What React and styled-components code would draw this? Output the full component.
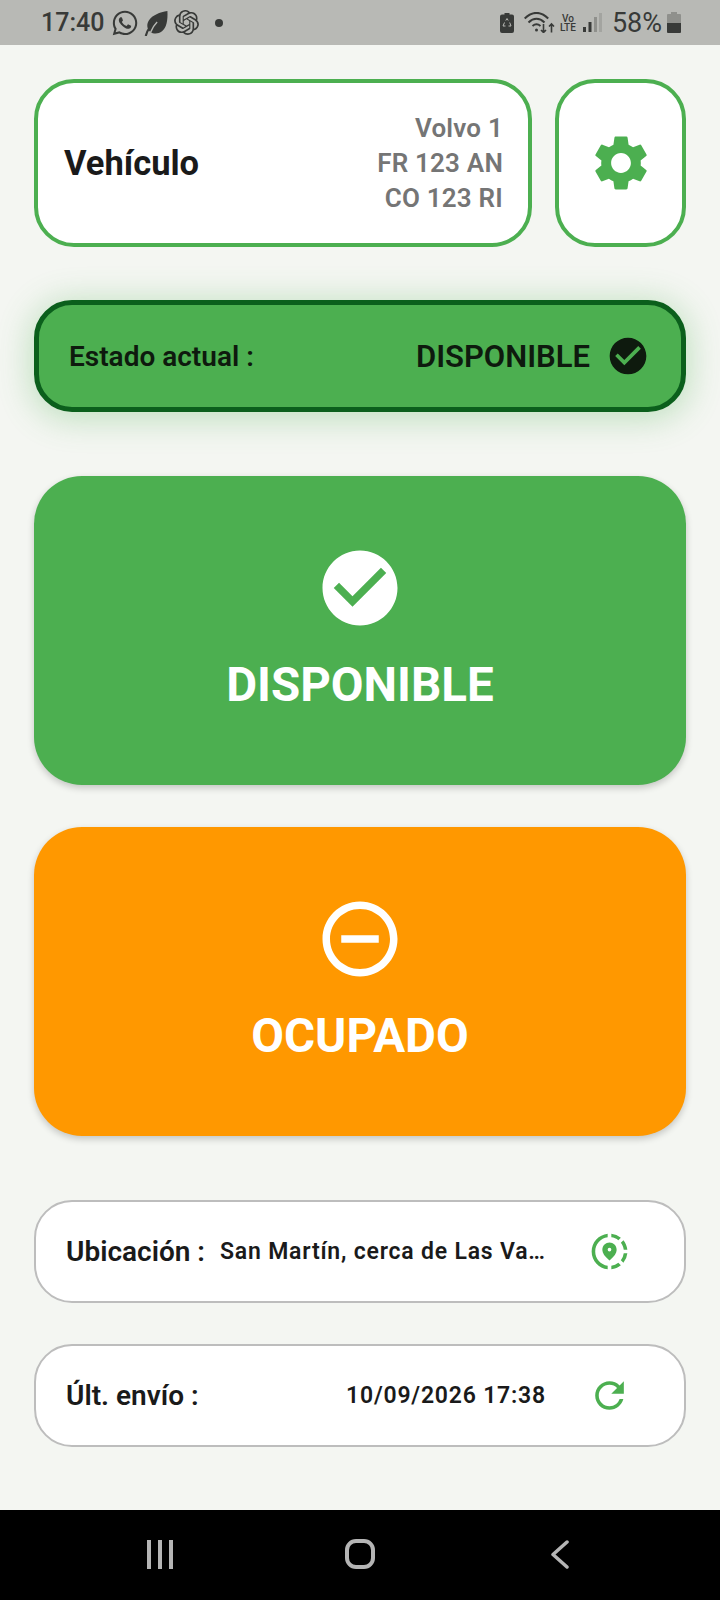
import styled, { createGlobalStyle } from "styled-components";
import { FaWhatsapp } from "react-icons/fa";
import { SiOpenai } from "react-icons/si";
import {
  MdSettings,
  MdCheckCircle,
  MdOutlineDoNotDisturbOn,
  MdOutlineShareLocation,
  MdRefresh,
} from "react-icons/md";

const GlobalStyle = createGlobalStyle`
  html, body {
    margin: 0;
    padding: 0;
    background: #f4f6f2;
    font-family: Roboto, "Liberation Sans", sans-serif;
  }
  * {
    box-sizing: border-box;
  }
`;

const Screen = styled.div`
  width: 720px;
  height: 1600px;
  display: flex;
  flex-direction: column;
  overflow: hidden;
`;

const StatusBar = styled.div`
  height: 45px;
  flex: none;
  background: #b8b9b5;
  color: #383a38;
  display: flex;
  align-items: center;
  justify-content: space-between;
  padding: 0 39px 0 41px;
`;
const StatusGroup = styled.div`
  display: flex;
  align-items: center;
`;
const Clock = styled.span`
  font-size: 25px;
  font-weight: 500;
  margin-right: 7px;
`;
const StatusIcon = styled.span`
  display: flex;
  font-size: ${(p) => p.$size || 24}px;
  margin-right: ${(p) => p.$gap || 0}px;
`;
const Dot = styled.span`
  width: 8px;
  height: 8px;
  border-radius: 50%;
  background: #383a38;
  margin-left: 16px;
`;
const Percent = styled.span`
  font-size: 27px;
  margin: 0 5px 0 10px;
`;
const VoLte = styled.span`
  display: flex;
  flex-direction: column;
  align-items: center;
  font-size: 10px;
  line-height: 9px;
  font-weight: 500;
  margin: 0 7px 0 5px;
`;

const Main = styled.main`
  flex: 1;
  padding: 34px 34px 0;
  display: flex;
  flex-direction: column;
`;

const TopRow = styled.div`
  display: flex;
  gap: 23px;
  height: 168px;
`;
const VehicleCard = styled.div`
  flex: 1;
  background: #fff;
  border: 4px solid #4caf50;
  border-radius: 40px;
  display: flex;
  align-items: center;
  justify-content: space-between;
  padding: 0 25px 0 26px;
`;
const VehicleTitle = styled.h2`
  margin: 0;
  font-size: 34.5px;
  font-weight: 700;
  color: #1a1a1a;
`;
const PlateList = styled.div`
  display: flex;
  flex-direction: column;
  align-items: flex-end;
  font-size: 26px;
  font-weight: 600;
  letter-spacing: 0.2px;
  line-height: 35px;
  color: #757575;
`;
const SettingsButton = styled.div`
  width: 131px;
  background: #fff;
  border: 4px solid #4caf50;
  border-radius: 40px;
  display: flex;
  align-items: center;
  justify-content: center;
  color: #4caf50;
  font-size: 66px;
`;

const CurrentState = styled.div`
  margin-top: 53px;
  height: 112px;
  background: #4caf50;
  border: 5px solid #0b5f1c;
  border-radius: 38px;
  box-shadow: 0 4px 32px 4px rgba(76, 175, 80, 0.3);
  display: flex;
  align-items: center;
  justify-content: space-between;
  padding: 0 31px 0 30px;
  color: #0e1a0e;
  font-weight: 600;
`;
const StateLabel = styled.span`
  font-size: 28px;
`;
const StateValue = styled.span`
  display: flex;
  align-items: center;
  gap: 16px;
  font-size: 31px;
  font-weight: 600;
  svg {
    font-size: 44px;
  }
`;

const ActionButton = styled.div`
  margin-top: ${(p) => p.$top}px;
  height: 309px;
  border-radius: 48px;
  background: ${(p) => p.$color};
  box-shadow: 0 3px 7px rgba(0, 0, 0, 0.2);
  color: #fff;
  display: flex;
  flex-direction: column;
  align-items: center;
  justify-content: center;
  gap: 26px;
  padding-bottom: 8px;
  svg {
    font-size: 90px;
  }
`;
const ActionLabel = styled.span`
  font-size: 47.5px;
  font-weight: 700;
  line-height: 52px;
`;

const InfoCard = styled.div`
  margin-top: ${(p) => p.$top}px;
  height: 103px;
  background: #fff;
  border: 2px solid #bdbdbd;
  border-radius: 38px;
  display: flex;
  align-items: center;
  padding: 0 53px 0 30px;
`;
const InfoLabel = styled.span`
  flex: none;
  font-size: 28px;
  font-weight: 600;
  color: #1a1a1a;
`;
const InfoValue = styled.span`
  flex: 1;
  min-width: 0;
  margin-left: 15px;
  margin-right: 42px;
  font-size: 23px;
  font-weight: 600;
  letter-spacing: 0.8px;
  color: #1a1a1a;
  text-align: ${(p) => p.$align || "left"};
  white-space: nowrap;
`;
const InfoIcon = styled.span`
  display: flex;
  color: #4caf50;
  font-size: 43px;
`;

const NavBar = styled.nav`
  height: 90px;
  flex: none;
  background: #000;
  display: grid;
  grid-template-columns: repeat(3, 1fr);
  align-items: center;
  justify-items: center;
  padding: 0 60px 2px;
  color: #b5b5b5;
`;

const MenuIcon = () => (
  <svg width="26" height="29" viewBox="0 0 26 29" fill="none" stroke="currentColor" strokeWidth="4">
    <path d="M2 0v29M13 0v29M24 0v29" />
  </svg>
);
const HomeIcon = () => (
  <svg width="30" height="30" viewBox="0 0 30 30" fill="none" stroke="currentColor" strokeWidth="4">
    <rect x="2" y="2" width="26" height="26" rx="9" />
  </svg>
);
const BackIcon = () => (
  <svg width="18" height="29" viewBox="0 0 18 29" fill="none" stroke="currentColor" strokeWidth="3.5" strokeLinecap="round" strokeLinejoin="round">
    <path d="M16 2L2 14.500l14 12.500" />
  </svg>
);

const LeafIcon = () => (
  <svg width="27" height="26" viewBox="0 0 24 24">
    <path d="M23 1c.5 9-1 15.500-5 18.700-3.500 2.700-8 2.700-11 .3C4 17.500 3.600 13 6 9.500 9 5 16 2 23 1z" fill="currentColor" />
    <path d="M3 24c1.500-6 5-10.500 10-13.500" fill="none" stroke="currentColor" strokeWidth="2" />
    <path d="M7.500 20.500c1.500-4 3.500-7 6-9.500" fill="none" stroke="#b8b9b5" strokeWidth="1.300" />
  </svg>
);
const RecycleBattery = () => (
  <svg width="14" height="20" viewBox="0 0 14 20" fill="currentColor">
    <path d="M4.500 0h5v1.500H12a2 2 0 0 1 2 2V18a2 2 0 0 1-2 2H2a2 2 0 0 1-2-2V3.500a2 2 0 0 1 2-2h2.500z" />
    <path d="M5.800 7.500l1.200-2 1.200 2M9.700 9.500l1.300 3.500H8.500M5.500 13H3l1.500-3.500" stroke="#b8b9b5" strokeWidth="1" fill="none" />
  </svg>
);
const WifiIcon = () => (
  <svg width="31" height="21" viewBox="0 0 31 21" fill="none" stroke="currentColor" strokeWidth="2">
    <path d="M0.700 6.500c7.500-7.500 16-7.500 23.500 0M4.500 10.500c5-5 11-5 16 0M8.500 14c3-2.500 5-2.500 8 0" />
    <circle cx="12.500" cy="18" r="1.500" fill="currentColor" stroke="none" />
    <path d="M19.500 12v8.500m-2.500-2.500l2.500 2.500 2.500-2.500M27.500 20.500V12m-2.500 2.500l2.500-2.500 2.500 2.500" strokeWidth="1.600" />
  </svg>
);
const SignalIcon = () => (
  <svg width="19" height="19" viewBox="0 0 19 19">
    <rect x="0" y="14" width="3" height="5" fill="#383a38" />
    <rect x="5.500" y="9" width="3" height="10" fill="#383a38" />
    <rect x="11" y="4" width="3" height="15" fill="#8f908c" />
    <rect x="16" y="0" width="3" height="19" fill="#a3a4a0" />
  </svg>
);
const BatteryIcon = () => (
  <svg width="14" height="21" viewBox="0 0 14 21">
    <path d="M4 0h6v2h3a1 1 0 0 1 1 1v8H0V3a1 1 0 0 1 1-1h3z" fill="#8f908c" />
    <path d="M0 11h14v9a1 1 0 0 1-1 1H1a1 1 0 0 1-1-1z" fill="#383a38" />
  </svg>
);

const App = () => {
  return (
    <Screen>
      <GlobalStyle />
      <StatusBar>
        <StatusGroup>
          <Clock>17:40</Clock>
          <StatusIcon $size={28} $gap={3}><FaWhatsapp /></StatusIcon>
          <StatusIcon $gap={5}><LeafIcon /></StatusIcon>
          <StatusIcon $size={25}><SiOpenai /></StatusIcon>
          <Dot />
        </StatusGroup>
        <StatusGroup>
          <StatusIcon $gap={10}><RecycleBattery /></StatusIcon>
          <StatusIcon><WifiIcon /></StatusIcon>
          <VoLte><span>Vo</span><span>LTE</span></VoLte>
          <StatusIcon><SignalIcon /></StatusIcon>
          <Percent>58%</Percent>
          <StatusIcon><BatteryIcon /></StatusIcon>
        </StatusGroup>
      </StatusBar>

      <Main>
        <TopRow>
          <VehicleCard>
            <VehicleTitle>Vehículo</VehicleTitle>
            <PlateList>
              <span>Volvo 1</span>
              <span>FR 123 AN</span>
              <span>CO 123 RI</span>
            </PlateList>
          </VehicleCard>
          <SettingsButton><MdSettings /></SettingsButton>
        </TopRow>

        <CurrentState>
          <StateLabel>Estado actual :</StateLabel>
          <StateValue>DISPONIBLE <MdCheckCircle /></StateValue>
        </CurrentState>

        <ActionButton $top={64} $color="#4caf50">
          <MdCheckCircle />
          <ActionLabel>DISPONIBLE</ActionLabel>
        </ActionButton>
        <ActionButton $top={42} $color="#ff9800">
          <MdOutlineDoNotDisturbOn />
          <ActionLabel>OCUPADO</ActionLabel>
        </ActionButton>

        <InfoCard $top={64}>
          <InfoLabel>Ubicación :</InfoLabel>
          <InfoValue>San Martín, cerca de Las Va…</InfoValue>
          <InfoIcon><MdOutlineShareLocation /></InfoIcon>
        </InfoCard>
        <InfoCard $top={41}>
          <InfoLabel>Últ. envío :</InfoLabel>
          <InfoValue $align="right">10/09/2026 17:38</InfoValue>
          <InfoIcon><MdRefresh /></InfoIcon>
        </InfoCard>
      </Main>

      <NavBar>
        <MenuIcon />
        <HomeIcon />
        <BackIcon />
      </NavBar>
    </Screen>
  );
};

export default App;
